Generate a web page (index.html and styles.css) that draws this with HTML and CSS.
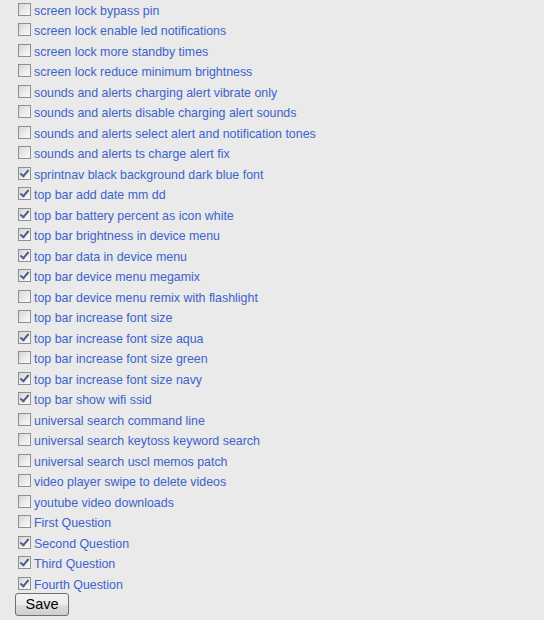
FILE: index.html
```html
<!DOCTYPE html>
<html>
<head>
<meta charset="utf-8">
<link rel="stylesheet" href="styles.css">
</head>
<body>
<form class="list">
  <label class="row"><input type="checkbox"><span>screen lock bypass pin</span></label>
  <label class="row"><input type="checkbox"><span>screen lock enable led notifications</span></label>
  <label class="row"><input type="checkbox"><span>screen lock more standby times</span></label>
  <label class="row"><input type="checkbox"><span>screen lock reduce minimum brightness</span></label>
  <label class="row"><input type="checkbox"><span>sounds and alerts charging alert vibrate only</span></label>
  <label class="row"><input type="checkbox"><span>sounds and alerts disable charging alert sounds</span></label>
  <label class="row"><input type="checkbox"><span>sounds and alerts select alert and notification tones</span></label>
  <label class="row"><input type="checkbox"><span>sounds and alerts ts charge alert fix</span></label>
  <label class="row"><input type="checkbox" checked><span>sprintnav black background dark blue font</span></label>
  <label class="row"><input type="checkbox" checked><span>top bar add date mm dd</span></label>
  <label class="row"><input type="checkbox" checked><span>top bar battery percent as icon white</span></label>
  <label class="row"><input type="checkbox" checked><span>top bar brightness in device menu</span></label>
  <label class="row"><input type="checkbox" checked><span>top bar data in device menu</span></label>
  <label class="row"><input type="checkbox" checked><span>top bar device menu megamix</span></label>
  <label class="row"><input type="checkbox"><span>top bar device menu remix with flashlight</span></label>
  <label class="row"><input type="checkbox"><span>top bar increase font size</span></label>
  <label class="row"><input type="checkbox" checked><span>top bar increase font size aqua</span></label>
  <label class="row"><input type="checkbox"><span>top bar increase font size green</span></label>
  <label class="row"><input type="checkbox" checked><span>top bar increase font size navy</span></label>
  <label class="row"><input type="checkbox" checked><span>top bar show wifi ssid</span></label>
  <label class="row"><input type="checkbox"><span>universal search command line</span></label>
  <label class="row"><input type="checkbox"><span>universal search keytoss keyword search</span></label>
  <label class="row"><input type="checkbox"><span>universal search uscl memos patch</span></label>
  <label class="row"><input type="checkbox"><span>video player swipe to delete videos</span></label>
  <label class="row"><input type="checkbox"><span>youtube video downloads</span></label>
  <label class="row"><input type="checkbox"><span>First Question</span></label>
  <label class="row"><input type="checkbox" checked><span>Second Question</span></label>
  <label class="row"><input type="checkbox" checked><span>Third Question</span></label>
  <label class="row"><input type="checkbox" checked><span>Fourth Question</span></label>
  <div class="actions"><button type="button" class="save">Save</button></div>
</form>
</body>
</html>
```
FILE: styles.css
```css
html, body {
  margin: 0;
  padding: 0;
  background: #e9eae9;
}
body {
  font-family: "Liberation Sans", Arial, sans-serif;
  font-size: 12.4px;
  overflow: hidden;
}
.list {
  display: flex;
  flex-direction: column;
  padding: 0 0 0 18px;
}
.row {
  display: flex;
  align-items: center;
  gap: 3px;
  height: 20.5px;
  color: #3d63cc;
  cursor: pointer;
}
.row span {
  position: relative;
  top: 0.5px;
}
.row input {
  appearance: none;
  -webkit-appearance: none;
  margin: 0;
  width: 13px;
  height: 13px;
  border: 1px solid #8f8f8f;
  box-sizing: border-box;
  background: linear-gradient(135deg, #d4d4d4 0%, #ececec 55%, #fafafa 100%);
  position: relative;
  flex: none;
  top: -1px;
}
.row input:checked::before {
  content: "";
  position: absolute;
  left: 3px;
  top: 0px;
  width: 3px;
  height: 7px;
  border-right: 2px solid #4e5f8c;
  border-bottom: 2px solid #4e5f8c;
  transform: rotate(40deg);
}
.actions {
  display: flex;
  margin-top: -2px;
  margin-left: -3px;
}
.save {
  font-family: "Liberation Sans", Arial, sans-serif;
  font-size: 14.5px;
  color: #000;
  width: 54px;
  height: 23px;
  padding: 0;
  border: 1px solid #707070;
  border-radius: 3px;
  background: linear-gradient(#f3f3f3 0%, #ebebeb 50%, #dddddd 51%, #cfcfcf 100%);
}
```
